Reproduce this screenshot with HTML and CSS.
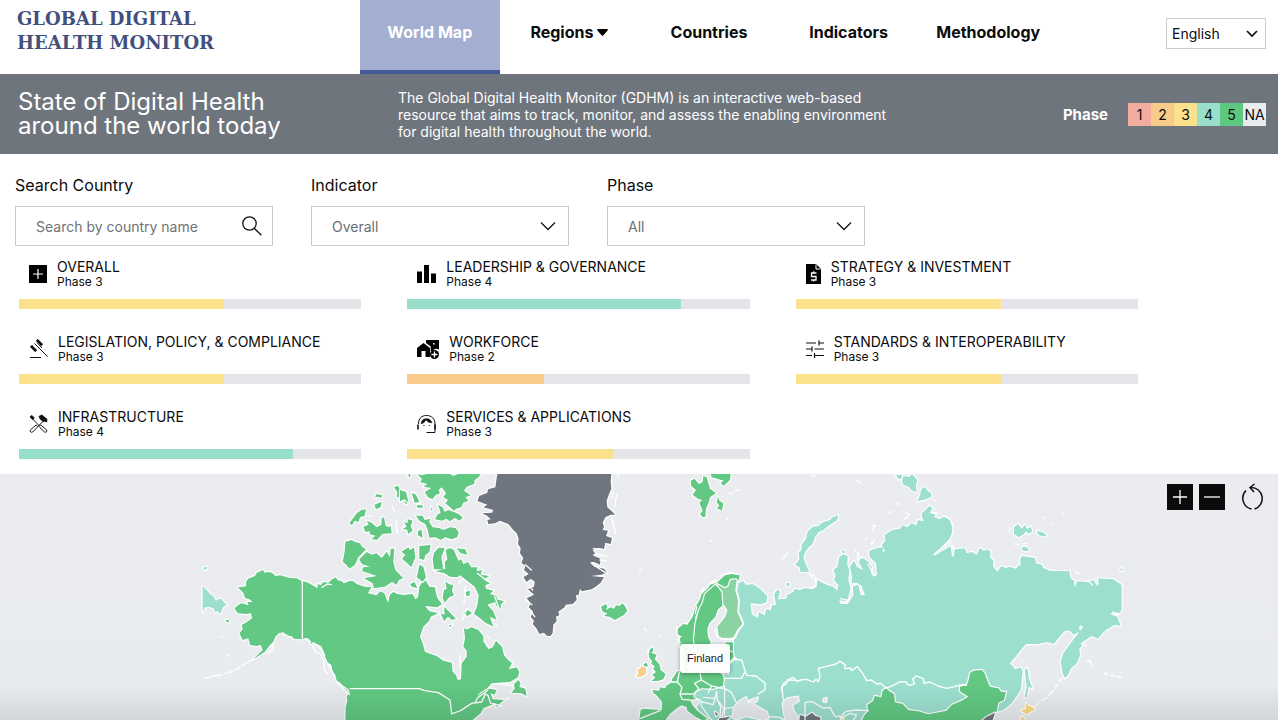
FILE: index.html
```html
<!DOCTYPE html>
<html lang="en">
<head>
<meta charset="utf-8">
<meta name="viewport" content="width=device-width, initial-scale=1">
<title>Global Digital Health Monitor</title>
<link rel="stylesheet" href="styles.css">
</head>
<body>
<header class="site-header">
  <a class="brand" href="#">Global Digital<br>Health Monitor</a>
  <nav class="main-nav">
    <a class="nav-link active" href="#">World Map</a>
    <a class="nav-link" href="#">Regions <svg width="11" height="7" viewBox="0 0 11 7"><path d="M1 0h9c.8 0 1.200.8.6 1.400L6.200 6.400a1 1 0 0 1-1.400 0L.4 1.400C-.2.8.2 0 1 0z"/></svg></a>
    <a class="nav-link" href="#">Countries</a>
    <a class="nav-link" href="#">Indicators</a>
    <a class="nav-link" href="#">Methodology</a>
  </nav>
  <div class="language select-wrap">
    <select aria-label="Language"><option>English</option></select>
    <svg class="chevron" width="12" height="8" viewBox="0 0 12 8"><path d="M1 1l5 5 5-5" fill="none" stroke="#111" stroke-width="1.700"/></svg>
  </div>
</header>

<section class="banner">
  <h1>State of Digital Health around the world today</h1>
  <p>The Global Digital Health Monitor (GDHM) is an interactive web-based resource that aims to track, monitor, and assess the enabling environment for digital health throughout the world.</p>
  <div class="legend">
    <strong>Phase</strong>
    <ul>
      <li class="p1">1</li><li class="p2">2</li><li class="p3">3</li><li class="p4">4</li><li class="p5">5</li><li class="na">NA</li>
    </ul>
  </div>
</section>

<form class="filters">
  <div class="field">
    <label for="country">Search Country</label>
    <div class="select-wrap">
      <input id="country" type="text" placeholder="Search by country name">
      <svg class="search-icon" width="20" height="20" viewBox="0 0 20 20" fill="none" stroke="#111" stroke-width="1.300"><circle cx="7.500" cy="7.500" r="6.700"/><path d="M12.300 12.300l7 7"/></svg>
    </div>
  </div>
  <div class="field">
    <label for="indicator">Indicator</label>
    <div class="select-wrap">
      <select id="indicator"><option>Overall</option></select>
      <svg class="chevron" width="16" height="9" viewBox="0 0 16 9"><path d="M1 1l7 7 7-7" fill="none" stroke="#111" stroke-width="1.300"/></svg>
    </div>
  </div>
  <div class="field">
    <label for="phase">Phase</label>
    <div class="select-wrap">
      <select id="phase"><option>All</option></select>
      <svg class="chevron" width="16" height="9" viewBox="0 0 16 9"><path d="M1 1l7 7 7-7" fill="none" stroke="#111" stroke-width="1.300"/></svg>
    </div>
  </div>
</form>

<section class="indicators">
  <article class="indicator">
    <div class="indicator-head">
      <svg width="18" height="18" viewBox="0 0 18 18"><path d="M0 0h18v18H0z"/><path d="M4 9h10M9 4v10" stroke="#fff" stroke-width="1.200"/></svg>
      <div><h2>Overall</h2><p>Phase 3</p></div>
    </div>
    <div class="track"><div class="fill p3" style="width:60%"></div></div>
  </article>
  <article class="indicator">
    <div class="indicator-head">
      <svg width="19" height="18" viewBox="0 0 19 18"><path d="M0 6.500h5V18H0zM7 0h5v18H7zM14 8.500h5V18h-5z"/></svg>
      <div><h2>Leadership &amp; Governance</h2><p>Phase 4</p></div>
    </div>
    <div class="track"><div class="fill p4" style="width:80%"></div></div>
  </article>
  <article class="indicator">
    <div class="indicator-head">
      <svg width="15" height="20" viewBox="0 0 15 20"><path d="M0 0h10l5 5v15H0z"/><path d="M10 .5V5h4.500" fill="none" stroke="#fff"/><path d="M10.500 9h-5v3.500h4.500V16H5M7.700 7.300V9m0 7v1.600" fill="none" stroke="#fff" stroke-width="1.300"/></svg>
      <div><h2>Strategy &amp; Investment</h2><p>Phase 3</p></div>
    </div>
    <div class="track"><div class="fill p3" style="width:60%"></div></div>
  </article>
  <article class="indicator">
    <div class="indicator-head">
      <svg width="19" height="20" viewBox="0 0 19 20" fill="none" stroke="#111"><path d="M1 18.500h11M5.500 4.500l13 13M8 3.500l5 5.500"/><path d="M2 7l5 5M8 1l5 5" stroke-width="2.600"/><path d="M1.500 8l1.800-1.800M6 12.500L8 10.700M7.200 2L9 .5M12 6.800l1.700-1.700"/></svg>
      <div><h2>Legislation, Policy, &amp; Compliance</h2><p>Phase 3</p></div>
    </div>
    <div class="track"><div class="fill p3" style="width:60%"></div></div>
  </article>
  <article class="indicator">
    <div class="indicator-head">
      <svg width="22" height="20" viewBox="0 0 22 20"><path d="M9 1h13v9.500a5 5 0 0 0-6.500 1.500l-1.800 0V7.500L9 4z"/><path d="M16 4h1.500v1.500H16z" fill="#fff"/><path d="M0 18V9l6.500-5L13 9v9H8.500v-6h-4v6z"/><circle cx="17.500" cy="15.500" r="4.500"/><path d="M14.500 15.500h6M17.500 12.500v6" stroke="#fff" stroke-width="1.300"/></svg>
      <div><h2>Workforce</h2><p>Phase 2</p></div>
    </div>
    <div class="track"><div class="fill p2" style="width:40%"></div></div>
  </article>
  <article class="indicator">
    <div class="indicator-head">
      <svg width="18" height="18" viewBox="0 0 18 18" fill="none" stroke="#111" stroke-width="1.200"><path d="M0 3h10M13 3h5M13 .5v5M0 9h4M6 6.500v5M4 9h2M8.500 9H18M0 15.500h6M8.500 13v5M8.500 15.500H18"/></svg>
      <div><h2>Standards &amp; Interoperability</h2><p>Phase 3</p></div>
    </div>
    <div class="track"><div class="fill p3" style="width:60%"></div></div>
  </article>
  <article class="indicator">
    <div class="indicator-head">
      <svg width="19" height="20" viewBox="0 0 20 20" fill="none" stroke="#111"><path d="M3 4l8 8M17 5l-8 8"/><path d="M1 2.500L3 1l2.500 2.500L4 5.500zM10.500 2l3-1.500L19 5l-.5 3-2-1-1.500.5L12 5z" fill="#111" stroke-width=".9"/><path d="M7.500 11l1.800 1.800-5.500 5.700c-1.500 1-3.300-.7-2.300-2.300zM12.300 11l-1.600 1.600 5.500 5.900c1.500 1 3.300-.7 2.300-2.300z"/></svg>
      <div><h2>Infrastructure</h2><p>Phase 4</p></div>
    </div>
    <div class="track"><div class="fill p4" style="width:80%"></div></div>
  </article>
  <article class="indicator">
    <div class="indicator-head">
      <svg width="19" height="20" viewBox="0 0 19 20" fill="none" stroke="#111"><path d="M1.500 10C1.500 4.500 4.500 1.500 9.500 1.500s8.500 3 8.500 8.500v8.500H9.500"/><path d="M1 10.500v5M18 10.500v5" stroke-width="1.600"/><path d="M4 10c2.500-.5 4-2 4.800-4 1.500 2 3.500 3 6.200 3-.5-3-2.500-4.600-5.500-4.600S4 6.500 4 10z" fill="#111" stroke-width=".2"/><path d="M6.500 11.500h1M11.700 11.500h1" stroke-width="1.200"/></svg>
      <div><h2>Services &amp; Applications</h2><p>Phase 3</p></div>
    </div>
    <div class="track"><div class="fill p3" style="width:60%"></div></div>
  </article>
</section>

<main class="map">
  <svg class="world" viewBox="0 474 1278 246" preserveAspectRatio="xMidYMin slice" role="img" aria-label="World map by phase">
    <!-- North America, west -->
    <g transform="translate(190 470) scale(.33333)">
      <path class="c5" d="M143 352L160 350L168 348L168 336L174 326L195 318L200 308L212 304L218 299L224 308L234 306L246 308L256 318L272 316L296 323L320 325L336 334L350 336L365 344L382 354L384 342L392 346L400 336L415 338L426 328L438 322L442 330L455 334L462 340L480 332L490 334L500 342L525 350L544 352L534 370L545 372L560 376L570 364L583 370L594 398L600 374L610 366L622 372L640 375L668 372L676 388L684 382L688 350L700 330L708 332L718 350L735 352L738 370L742 384L756 402L742 412L705 408L718 424L745 430L722 440L718 452L700 470L690 500L698 520L705 545L722 552L740 558L760 572L785 578L788 605L798 615L804 631L813 627L815 580L830 560L830 542L820 530L825 505L822 475L832 478L845 472L865 480L880 498L880 515L892 526L894 538L908 532L918 512L936 530L942 556L955 570L966 580L956 598L980 592L988 605L984 622L960 636L905 640L892 655L870 668L860 680L880 665L900 656L920 660L914 674L902 670L908 688L942 690L918 712L916 700L880 715L872 730L850 748L840 765L466 765L467 710L472 694L470 680L476 668L462 655L446 640L440 630L428 605L424 585L414 578L400 550L394 538L385 525L370 516L364 522L350 503L336 508L312 506L304 498L290 500L280 492L268 488L256 500L250 515L240 525L225 545L205 558L190 568L205 552L218 540L212 525L200 528L180 525L175 505L158 510L148 490L158 478L155 465L172 455L186 445L183 430L168 432L143 430L133 415L148 403L156 400L176 406L172 396L188 396L178 388L165 384L160 368Z"/>
      <path class="c5" d="M466 215L485 210L496 216L510 220L516 230L528 238L505 262L495 285L478 296L470 286L458 275L464 245ZM508 268L530 246L545 254L560 250L575 264L590 245L600 262L602 236L613 236L610 275L616 300L628 312L640 325L626 330L620 345L606 335L585 350L552 355L548 340L522 325L560 318L516 303L520 292L540 290L515 282ZM478 160L488 146L500 130L514 120L528 118L524 138L510 142L506 156L494 152L486 166ZM520 170L536 164L530 152L545 158L560 172L574 164L575 145L582 142L587 168L600 172L602 164L605 190L578 192L560 210L545 207L556 197L538 192L540 184L526 186ZM555 82L560 72L570 74L577 76L574 83L562 80ZM553 104L575 95L572 112L558 118ZM612 52L624 47L630 58L645 72L648 84L656 98L648 102L638 88L620 80L622 66ZM666 70L680 75L684 88L692 96L676 100ZM642 155L652 160L654 148L668 152L662 168L668 182L654 192L652 180L638 176L650 170ZM634 245L655 232L660 240L672 232L676 262L664 292L650 278L636 266L646 254ZM660 342L674 336L682 355L665 350ZM106 450L116 450L118 458L108 454ZM654 12L662 14L658 24Z"/>
      <path class="c4" d="M38 348L50 360L60 372L70 378L78 392L86 386L95 388L110 405L100 410L96 420L92 432L82 424L75 428L72 416L58 410L45 412L38 425ZM40 292L52 291L50 298L40 299Z"/>
      <path class="isles" d="M45 625L58 622M66 619L92 615M104 611L128 604M134 600L150 592M156 586L186 570M92 500L97 502M113 553L117 558M232 552L246 540L250 520M366 524L376 545L390 552L402 576L404 600L412 610M378 524L392 530L404 556M412 580L424 600L436 620M444 636L460 650L474 660L478 674M608 108L614 128M536 136L546 138M618 150L622 190M352 506L362 516M276 488L300 502M396 352L412 342L424 344"/>
      <path class="border" d="M337 334V505M480 656H688L705 662L745 668L780 690L785 732L812 722L845 700L856 698L862 684L892 662M845 700L875 696L886 672L894 676L902 700"/>
    </g>
    <!-- Canadian Arctic, Greenland and Iceland -->
    <g transform="translate(400 470) scale(.33333)">
      <path class="c5" d="M52 12L65 16L80 12H150L160 18L175 12H242L236 22L224 30L222 42L200 50L192 62L212 76L196 82L206 92L190 98L184 112L168 116L162 122L150 112L136 100L144 90L130 82L138 70L125 52L116 60L120 70L106 76L98 88L84 82L74 66L94 54L70 50L82 42L60 36L66 28ZM0 60L18 66L26 98L14 88L0 94ZM35 68L48 74L58 96L44 98ZM50 106H68V113H52ZM92 112L98 118L94 122ZM105 148L112 134L122 128L114 104L128 112L134 126L144 120L162 126L176 132L188 142L180 152L164 144L150 154L138 146L128 152ZM48 137L68 137L74 150L90 146L88 156L98 172L118 174L130 180L150 172L166 174L176 186L172 202L154 208L136 202L122 210L106 202L88 203L84 182L76 162L58 152ZM54 184L64 178L68 204L54 196ZM58 228L92 225L88 246L76 256L72 270L58 266ZM58 284L70 290L78 322L68 335L50 322L54 306ZM102 248L116 233L134 234L124 262L130 298L102 298L98 268ZM137 240L150 234L162 240L168 256L176 272L184 268L190 282L204 276L214 292L232 292L230 304L246 300L242 314L268 318L252 328L270 340L256 346L258 356L280 362L270 372L290 378L290 388L312 394L302 404L304 418L288 406L286 396L262 404L280 424L290 450L270 440L280 470L256 458L240 445L222 432L232 406L236 376L224 350L206 336L180 316L172 322L150 320L134 310L106 304L136 296L134 276L142 268ZM170 235L196 238L202 254L182 250ZM136 334L146 342L160 346L156 362L162 376L148 382L134 398L128 384L132 360L140 356ZM122 430L134 434L132 410L146 424L168 446L156 450L144 440L132 454ZM190 428L204 420L216 430L202 438ZM196 366L210 362L208 378L200 378ZM146 466L156 464L150 472ZM334 668L344 656L342 642L355 630L362 640L358 650L376 656L380 678L364 670Z"/>
      <path class="na-land" d="M292 12H634L632 35L634 56L626 75L620 92L622 112L634 122L646 134L632 134L616 142L608 158L612 170L608 180L624 182L618 198L636 204L632 222L616 218L612 238L596 234L578 240L586 250L578 256L602 266L600 284L582 276L570 276L584 290L612 296L622 308L604 314L572 318L612 322L602 338L590 348L575 358L545 364L540 356L536 374L528 376L530 390L518 402L497 404L494 412L475 425L478 436L468 440L470 454L460 464L458 488L452 498L440 497L432 488L418 492L410 476L398 462L402 452L392 440L400 426L386 412L392 400L380 385L402 374L384 358L402 350L404 335L392 326L380 336L370 322L386 312L372 300L376 288L364 278L370 264L360 250L362 234L354 222L356 206L350 190L340 180L325 162L300 152L285 160L265 162L262 150L272 148L262 138L246 130L276 128L280 120L250 112L262 104L232 93L238 78L262 68L264 58L286 52Z"/>
      <path class="c5" d="M603 410L618 402L622 410L618 420L632 412L642 416L648 406L658 408L668 400L676 410L682 422L672 435L645 450L628 440L612 438L622 430L608 425Z"/>
      <path class="isles" d="M640 66L636 84M650 74L644 110M636 142L646 190M580 236L610 238M586 252L620 258M600 270L618 272M576 282L620 310M376 284L394 300M386 346L398 360M378 390L396 404M390 420L404 440M262 500L268 504M255 515L262 530M286 460L290 470M300 640L340 648M276 700L306 708M318 688L328 682M180 556L180 586M176 340L190 326M196 350L192 400M200 416L188 450M284 380L298 416M232 310L262 334"/>
    </g>
    <!-- Russia, Central Asia and East Asia -->
    <g transform="translate(780 470) scale(.33333)">
      <path class="c4" d="M-128 340L-110 333L-102 344L-80 343L-58 358L-38 378L-40 396L-58 403L-88 400L-85 432L-66 444L-64 426L-45 436L-42 418L-28 420L-24 406L-12 404L-18 372L-6 358L0 366L-6 388L18 386L22 374L40 366L44 356L60 360L76 354L98 358L110 345L112 330L140 344L160 350L172 362L175 345L162 330L167 318L160 300L172 290L178 260L190 253L203 258L202 284L208 300L205 330L212 355L204 386L195 394L178 390L182 402L203 402L220 375L218 350L235 344L242 374L255 376L245 348L230 338L215 340L216 318L210 290L222 272L232 292L250 300L236 276L245 262L265 275L275 290L274 312L282 320L291 315L288 280L268 260L268 242L292 234L310 232L308 248L315 242L305 225L316 212L314 194L336 180L360 176L368 166L382 172L394 160L410 166L414 150L430 154L424 132L448 108L458 114L450 128L470 130L462 140L478 148L492 140L508 148L518 165L516 188L510 205L485 230L458 254L466 256L488 242L512 228L516 260L522 258L524 238L555 235L560 250L576 246L590 254L600 234L612 242L622 238L632 245L630 262L640 272L640 290L652 305L664 288L676 294L690 290L708 296L714 288L722 284L720 270L726 258L766 264L768 280L786 284L790 294L810 302L868 304L872 325L882 332L884 352L892 334L924 336L940 330L952 348L956 340L954 325L1000 328L1025 345L1025 420L1018 430L1002 426L990 432L1012 440L1022 468L1005 464L978 480L966 492L955 506L935 498L908 516L904 530L898 536L900 556L892 578L872 596L866 612L855 625L848 610L842 575L850 550L875 515L910 470L902 466L896 472L902 484L880 494L870 482L855 482L832 508L822 522L800 516L775 522L738 522L690 580L700 590L705 598L722 592L728 605L722 660L695 700L670 720L640 728L600 765H-220L-232 740L-250 710L-238 696L-250 685L-252 668L-170 640L-172 620L-155 590L-138 570L-142 545L-138 510L-110 462L-125 430L-124 390L-130 360Z"/>
      <path class="c4" d="M175 136L172 150L150 164L130 180L116 186L105 202L98 222L86 232L76 245L70 262L78 284L88 305L62 306L58 290L45 285L58 268L56 248L64 240L66 222L78 206L82 186L98 170L115 168L125 158L150 150L158 142ZM348 15L365 14L366 24L356 28ZM370 18L388 20L396 12L412 30L408 46L410 66L396 62L385 50L370 44L366 34ZM412 94L420 76L424 58L436 50L442 62L454 70L454 80L438 88ZM702 172L714 162L726 176L734 164L742 178L752 170L757 184L748 192L738 184L732 192L716 202L702 192ZM770 182L786 186L802 196L790 200L775 194ZM725 232L738 230L746 238L744 244L728 242ZM1020 300L1028 292L1026 303ZM20 340L28 338L30 346L20 350ZM186 242L194 240L192 250L186 248ZM734 600L743 594L746 625L757 655L746 650L740 683L734 680L740 650ZM96 316L106 322L104 328Z"/>
      <path class="c5" d="M240 765L252 738L265 722L262 705L280 692L284 678L304 682L308 662L318 654L328 664L342 672L345 697L368 702L385 720L415 724L445 733L500 722L515 705L545 692L565 680L540 664L540 650L560 645L566 630L570 610L580 602L605 600L614 610L622 632L630 650L655 655L664 666L678 665L672 690L655 698L650 725L632 735L620 745L600 765Z"/>
      <path class="na-land" d="M606 752L618 742L645 728L640 745L632 765H606ZM52 765L60 735L78 740L96 728L106 738L120 742L124 765Z"/>
      <path class="c3" d="M722 722L738 716L738 700L748 708L762 714L764 720L748 726L744 734ZM724 740L734 743L732 765H722ZM182 744L190 744L188 752Z"/>
      <path class="sea" d="M8 700L20 686L54 680L56 694L36 704L40 722L56 744L50 765H20L12 730ZM132 686L140 684L138 696L130 694Z"/>
      <path class="border" d="M10 690L5 650L18 642L22 630L40 622L50 634L62 630L80 628L100 636L108 628L115 635L120 618L115 595L168 582L180 574L195 584L195 596L212 594L215 602L232 590L248 610L260 632L275 630L290 642L302 640L318 655L340 646L360 635L378 636L386 646L404 642L398 628L408 618L430 626L432 640L450 636L474 648L500 655L524 650L540 645M75 755V698L95 694L130 714L150 712L165 740L184 738L198 724L230 720L265 722M184 744L210 730L230 735L220 750M540 645L560 645"/>
      <path class="isles" d="M230 32L244 38M95 16L105 18M275 168H286L276 185M255 210L260 206M274 222L284 210M225 242L236 250L232 268L246 262M264 282L282 316M328 128L334 124M350 100L356 104M370 150L384 140M378 128L388 134M460 90L470 92M452 128L468 132M500 140L512 150L518 170M492 228L512 216M516 226L522 234M690 172L688 184M704 222L716 224M790 145L794 142M848 130L850 132M818 162L820 162M730 222L740 220M886 306L900 310M924 330L938 346M998 426L1012 434M904 520L920 528M920 576L928 572L936 584M972 608L982 614M992 616L1004 618M1012 620L1024 622M760 714L776 700M784 692L800 684M806 676L818 664M826 654L832 644M838 636L844 626M88 312L106 330L108 350L92 352M182 386L205 392"/>
    </g>
    <!-- Europe -->
    <g transform="translate(600 470) scale(.33333)">
      <path class="c5" d="M272 32L284 26L296 42L308 36L310 18L320 22L330 56L348 70L330 82L326 98L318 116L316 140L308 142L300 132L308 122L298 98L306 90L294 86L278 74L288 60L274 48ZM332 12H392L390 30L370 48L362 38L372 32L335 22ZM355 80L358 92L370 100L366 122L350 114L358 108L350 96Z"/>
      <path class="c5" d="M232 478L250 462L262 464L278 440L286 412L300 388L305 372L324 355L330 344L350 338L362 328L375 316L395 312L420 316L415 332L400 326L392 345L375 355L355 342L340 350L315 375L308 400L296 416L286 440L285 465L282 490L284 530L262 545L240 530L236 506L246 500L232 492Z"/>
      <path class="c5" d="M345 345L365 358L368 380L370 405L354 418L346 440L328 460L322 478L324 500L332 516L326 545L300 560L288 540L282 510L286 462L298 418L308 400L315 372Z"/>
      <path class="finland" d="M350 342L375 355L385 350L392 330L408 328L413 340L408 360L416 390L414 426L430 462L414 480L404 500L375 508L356 498L352 470L376 440L382 420L370 402L368 365Z"/>
      <path class="c5" d="M158 660L178 662L180 652L196 655L198 648L215 636L216 628L232 604L245 602L252 530H270L265 600L300 608L330 598L366 612L372 625L368 655L345 664L325 668L290 665L288 676L310 682L270 690L278 706L292 722L322 746L310 752L288 742L262 722L260 712L245 706L232 714L212 730L200 745L190 765H116L122 720L130 716L185 720L186 698L182 690L168 674L160 670Z"/>
      <path class="c5" d="M376 517L399 517L398 545L402 562L388 574L370 560L352 545L360 535L380 542Z"/>
      <path class="c5" d="M145 542L158 532L160 542L154 548L170 554L164 568L178 582L182 600L197 612L190 628L176 632L154 634L166 622L156 616L168 606L160 598L164 588L154 582L156 572L148 564ZM130 582L140 578L144 588L134 592Z"/>
      <path class="c2" d="M108 620L116 608L112 598L120 598L124 588L138 594L138 612L124 620Z"/>
      <path class="c4" d="M286 668L306 658L340 660L372 650V765H352L330 742L305 706L306 690L284 680Z"/>
      <path class="sea" d="M398 742L402 712L420 692L438 682L445 700L462 694L462 704L500 726L506 745L490 750L440 738L410 748ZM448 692L474 682L470 694Z"/>
      <path class="na-land" d="M345 725L354 732L348 738ZM352 765L358 745L392 740L380 750L366 765Z"/>
      <path class="border" d="M411 336L408 360L416 390L414 426L430 462L414 480L404 500M238 606L232 636L215 636M232 636L246 652L240 672L246 688L270 690M240 672L285 672M300 608L304 630L284 640L296 656L286 668M304 630L335 648L368 655M335 648L325 668M366 612L386 612L385 580L400 568L425 570L436 604L424 625H386L372 625M436 604L440 616L468 618L496 640L494 660L474 672M402 562L412 568M310 682L345 685L350 664L352 690L372 716L400 712M345 685L340 704L306 696M352 690L362 712L360 740M372 716L366 740M372 654L395 668L410 700M122 745L180 722M378 540L396 545M545 660L550 640L570 630L600 632M506 740L540 742L560 756M250 604V580"/>
      <path class="isles" d="M302 366L312 354M328 340L346 332M360 318L374 312L390 306L412 312M388 68L396 72M402 66L420 58M380 150L384 146M330 212L336 213M118 304L126 298M132 475L138 482M178 502L180 496M148 535L146 548M232 470L230 490M236 498L240 520M352 500L344 480M544 270L556 258L562 250M60 8L52 22M290 410L286 430M360 510L372 505L400 508L408 500"/>
    </g>
  </svg>
  <div class="map-tools">
    <button class="zoom" type="button" aria-label="Zoom in"><svg width="16" height="16" viewBox="0 0 16 16"><path d="M1 8h14M8 1v14" stroke="#fff" stroke-width="1.300"/></svg></button>
    <button class="zoom" type="button" aria-label="Zoom out"><svg width="16" height="16" viewBox="0 0 16 16"><path d="M0 8h16" stroke="#fff" stroke-width="1.300"/></svg></button>
    <button class="reset" type="button" aria-label="Reset map"><svg width="24" height="28" viewBox="0 0 24 28" fill="none" stroke="#111" stroke-width="1.500"><path d="M10.500 26A11 11 0 0 1 5 7.500M13.500 26A11 11 0 0 0 10 4.500"/><path d="M13.500 1L9 4.500l4 4.500"/></svg></button>
  </div>
  <div class="tooltip" role="tooltip">Finland</div>
</main>
</body>
</html>
```
FILE: styles.css
```css
* { box-sizing: border-box; }

body {
  margin: 0;
  min-height: 100vh;
  display: flex;
  flex-direction: column;
  background: #fff;
  color: #0b0c0e;
  font-family: Inter, "Liberation Sans", sans-serif;
  font-size: 16px;
}

h1, h2, p, ul { margin: 0; padding: 0; font-weight: 400; }
a { color: inherit; text-decoration: none; }
input, select, button { font: inherit; color: inherit; border-radius: 0; }
svg { display: block; flex: none; }

.p1 { background: #f2ad9f; }
.p2 { background: #f8cb8a; }
.p3 { background: #fbe18c; }
.p4 { background: #97dfcb; }
.p5 { background: #5cc880; }
.na { background: #eaebef; }

.site-header {
  display: grid;
  grid-template-columns: 360px minmax(0, 698px) 1fr;
  height: 74px;
}

.brand {
  padding: 7px 0 0 17px;
  color: #434f7d;
  font-family: "DejaVu Serif", serif;
  font-size: 18px;
  line-height: 24px;
  font-weight: 700;
  text-transform: uppercase;
}

.main-nav { display: grid; grid-template-columns: repeat(5, 1fr); }

.nav-link {
  display: flex;
  align-items: center;
  justify-content: center;
  gap: 4px;
  padding-bottom: 6px;
  border-bottom: 4px solid transparent;
  font-weight: 700;
}

.nav-link.active {
  background: #a3aed0;
  border-color: #435999;
  color: #fff;
}

.select-wrap { position: relative; }
.select-wrap select, .select-wrap input {
  display: block;
  width: 100%;
  appearance: none;
  border: 1px solid #c9cacc;
  background: #fff;
  outline: 0;
}

.language {
  align-self: start;
  justify-self: end;
  width: 100px;
  margin: 18px 12px 0 0;
}
.language select { height: 31px; padding: 0 5px; font-size: 14px; }

.chevron, .search-icon {
  position: absolute;
  top: 50%;
  transform: translateY(-50%);
  pointer-events: none;
}
.chevron { right: 13px; }
.search-icon { right: 11px; }
.language .chevron { right: 8px; }

.banner {
  display: flex;
  align-items: center;
  height: 80px;
  padding: 0 12px 0 18px;
  background: #6f757c;
  color: #fff;
}
.banner h1 { width: 280px; font-size: 24px; line-height: 24px; }
.banner p { width: 500px; margin-left: 100px; font-size: 14px; line-height: 17px; }

.legend { display: flex; align-items: center; gap: 20px; margin-left: auto; font-size: 15px; }
.legend ul { display: flex; list-style: none; color: #0b0c0e; font-size: 14px; }
.legend li { width: 23px; line-height: 23px; text-align: center; }

.filters { display: flex; gap: 38px; padding: 19px 15px 0; }
.field { width: 258px; }
.field label { display: block; margin-bottom: 9px; line-height: 24px; }
.field input, .field select { height: 40px; padding: 0 20px; font-size: 14px; color: #6a6f76; }
.field input::placeholder { color: #6f7276; opacity: 1; }

.indicators {
  display: grid;
  grid-template-columns: repeat(3, 1fr);
  gap: 25px 46px;
  padding: 13px 140px 15px 19px;
}
.indicator-head {
  display: flex;
  align-items: center;
  gap: 10px;
  height: 30px;
  padding-left: 10px;
}
.indicator h2 { font-size: 14px; line-height: 16px; text-transform: uppercase; }
.indicator p { font-size: 12px; line-height: 14px; }
.track { height: 10px; margin-top: 10px; background: #e4e5e9; }
.fill { height: 100%; }

.map {
  position: relative;
  flex: 1;
  min-height: 246px;
  overflow: hidden;
  background: linear-gradient(#ebecf0, #e8ebee);
}
.map::after {
  content: "";
  position: absolute;
  inset: auto 0 0;
  height: 36px;
  background: linear-gradient(transparent, rgba(0, 0, 0, .09));
  pointer-events: none;
}
.world { position: absolute; inset: 0; width: 100%; height: 100%; }
.world path {
  stroke: #fff;
  stroke-width: 7;
  stroke-linejoin: round;
  stroke-linecap: round;
  paint-order: stroke;
}
.world .c2 { fill: #f9cc8a; }
.world .c3 { fill: #f9dc82; }
.world .c4 { fill: #9cdfcf; }
.world .c5 { fill: #62c883; }
.world .finland { fill: #8cd3a3; }
.world .na-land { fill: #70767f; }
.world .sea { fill: #e8ebee; }
.world .border, .world .isles { fill: none; stroke-width: 4; }

.map-tools {
  position: absolute;
  top: 9px;
  right: 13px;
  display: flex;
  align-items: center;
  gap: 6px;
}
.map-tools button {
  display: grid;
  place-items: center;
  padding: 0;
  border: 0;
  background: none;
}
.map-tools .zoom { width: 26px; height: 26px; background: #0b0b0b; }
.map-tools .reset { margin-left: 10px; }

.tooltip {
  position: absolute;
  top: 170px;
  left: 680px;
  padding: 0 7px;
  border-radius: 3px;
  background: rgba(255, 255, 255, .95);
  box-shadow: 0 1px 4px rgba(0, 0, 0, .35);
  color: #222;
  font-family: "Liberation Sans", Arial, sans-serif;
  font-size: 11px;
  line-height: 29px;
}
```
